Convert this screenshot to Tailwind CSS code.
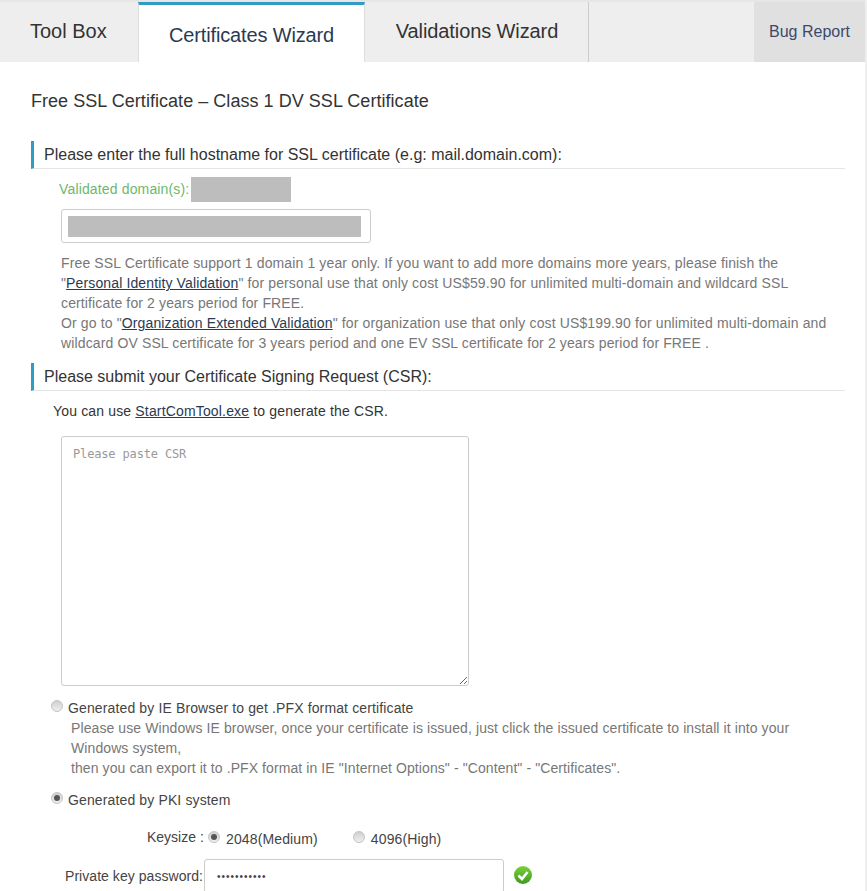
<!DOCTYPE html>
<html lang="en">
<head>
  <meta charset="UTF-8">
  <title>Certificates Wizard</title>
  <script src="https://cdn.jsdelivr.net/npm/@tailwindcss/browser@4"></script>
</head>
<body class="bg-white font-['Liberation_Sans',Arial,sans-serif] text-[14px] leading-[20px] text-[#333]">
  <div class="w-[867px] h-[891px] overflow-hidden border-r-2 border-[#eee]">
    <!-- Tabs -->
    <nav class="flex h-[62px] bg-[#eeeeee] border-t-2 border-[#e6e6e6] text-[20px]">
      <a class="w-[138px] pl-[30px] pt-[19px] text-[#333]">Tool Box</a>
      <a class="w-[227px] h-[60px] bg-white border-t-[3px] border-x border-[#ddd] border-t-[#2f9cc4] text-center pt-[20px] tracking-[-0.15px] text-[#2a3a52]">Certificates Wizard</a>
      <a class="w-[224px] border-r border-[#ccc] text-center pt-[19px] pl-[1px] tracking-[-0.1px] text-[#333]">Validations Wizard</a>
      <a class="ml-auto w-[111px] bg-[#e0e0e0] text-[16px] text-center pt-[20px] text-[#3b4a6b]">Bug Report</a>
    </nav>

    <div class="pl-[31px] pr-[20px] tracking-[0.13px]">
      <h1 class="text-[18px] leading-[24px] pt-[27px] h-[79px] tracking-[0.04px] text-[#333]">Free SSL Certificate – Class 1 DV SSL Certificate</h1>

      <h2 class="h-[28px] border-l-[3px] border-l-[#2f9cc4] border-b border-b-[#e5e5e5] pl-[10px] text-[16px] leading-[28px] tracking-normal">Please enter the full hostname for SSL certificate (e.g: mail.domain.com):</h2>

      <div class="flex items-center mt-[8px] ml-[28px] h-[25px] text-[#6cb86c]">
        <span class="mb-[2px] tracking-[0.15px]">Validated domain(s):</span>
        <span class="w-[100px] h-[25px] ml-[2px] bg-[#bdbdbd]"></span>
      </div>
      <div class="ml-[30px] mt-[7px] w-[310px] h-[34px] border border-[#ccc] rounded-[3px] flex items-center px-[6px]">
        <div class="w-[293px] h-[21px] bg-[#bdbdbd]"></div>
      </div>

      <div class="ml-[30px] mt-[10px] text-[#777]">
        Free SSL Certificate support 1 domain 1 year only. If you want to add more domains more years, please finish the<br>
        "<a class="underline text-[#2a3a52]">Personal Identity Validation</a>" for personal use that only cost US$59.90 for unlimited multi-domain and wildcard SSL<br>
        certificate for 2 years period for FREE.<br>
        Or go to "<a class="underline text-[#2a3a52]">Organization Extended Validation</a>" for organization use that only cost US$199.90 for unlimited multi-domain and<br>
        wildcard OV SSL certificate for 3 years period and one EV SSL certificate for 2 years period for FREE .
      </div>

      <h2 class="h-[28px] mt-[10px] border-l-[3px] border-l-[#2f9cc4] border-b border-b-[#e5e5e5] pl-[10px] text-[16px] leading-[28px] tracking-normal">Please submit your Certificate Signing Request (CSR):</h2>

      <p class="ml-[22px] mt-[10px] tracking-[0.16px]">You can use <a class="underline text-[#2a3a52]">StartComTool.exe</a> to generate the CSR.</p>

      <textarea class="block ml-[30px] mt-[15px] w-[408px] h-[250px] border border-[#ccc] rounded-[3px] px-[11px] py-[7px] text-[12px] tracking-[-0.15px] font-['DejaVu_Sans_Mono',monospace] placeholder:text-[#999]" placeholder="Please paste CSR"></textarea>

      <!-- IE option -->
      <label class="flex items-center ml-[20px] mt-[12px] h-[20px]">
        <span class="w-[12px] h-[12px] rounded-full bg-linear-to-b from-[#cfcfcf] to-[#efefef] border border-[#c4c4c4] mr-[5px] mb-[4px]"></span>
        <span class="text-[#444]">Generated by IE Browser to get .PFX format certificate</span>
      </label>
      <div class="ml-[40px] text-[#777] tracking-[0.09px]">
        Please use Windows IE browser, once your certificate is issued, just click the issued certificate to install it into your<br>
        Windows system,<br>
        then you can export it to .PFX format in IE "Internet Options" - "Content" - "Certificates".
      </div>

      <!-- PKI option -->
      <label class="flex items-center ml-[20px] mt-[12px] h-[20px]">
        <span class="flex items-center justify-center w-[12px] h-[12px] rounded-full bg-linear-to-b from-[#cfcfcf] to-[#efefef] border border-[#c4c4c4] mr-[5px] mb-[4px]">
          <span class="w-[6px] h-[6px] rounded-full bg-[#555]"></span>
        </span>
        <span class="text-[#444]">Generated by PKI system</span>
      </label>

      <div class="flex items-center ml-[116px] mt-[19px] h-[20px] text-[#444]">
        <span class="w-[61px] shrink-0 mb-[4px] tracking-normal">Keysize :</span>
        <span class="flex items-center justify-center w-[12px] h-[12px] rounded-full bg-linear-to-b from-[#cfcfcf] to-[#efefef] border border-[#c4c4c4] mr-[6px] mb-[4px]">
          <span class="w-[6px] h-[6px] rounded-full bg-[#555]"></span>
        </span>
        <span>2048(Medium)</span>
        <span class="w-[12px] h-[12px] ml-[35px] rounded-full bg-linear-to-b from-[#cfcfcf] to-[#efefef] border border-[#c4c4c4] mr-[6px] mb-[4px]"></span>
        <span>4096(High)</span>
      </div>

      <div class="flex items-center ml-[34px] mt-[10px] text-[#444]">
        <span class="w-[139px] shrink-0 whitespace-nowrap tracking-[0.05px]">Private key password:</span>
        <input type="password" value="12345678901" class="w-[300px] shrink-0 h-[34px] border border-[#ccc] rounded-[3px] px-[12px] text-[10px] tracking-[1px]">
        <svg class="ml-[10px] mb-[2px] shrink-0" width="18" height="18" viewBox="0 0 18 18">
          <defs><linearGradient id="okFill" x1="0" y1="0" x2="0" y2="1"><stop offset="0" stop-color="#7ed03a"/><stop offset="1" stop-color="#3c9a1e"/></linearGradient></defs>
          <circle cx="9" cy="9" r="9" fill="url(#okFill)"/><path d="M4.5 9.5 8 13 13.5 6" fill="none" stroke="#fff" stroke-width="2.6"/>
        </svg>
      </div>
    </div>
  </div>
</body>
</html>
